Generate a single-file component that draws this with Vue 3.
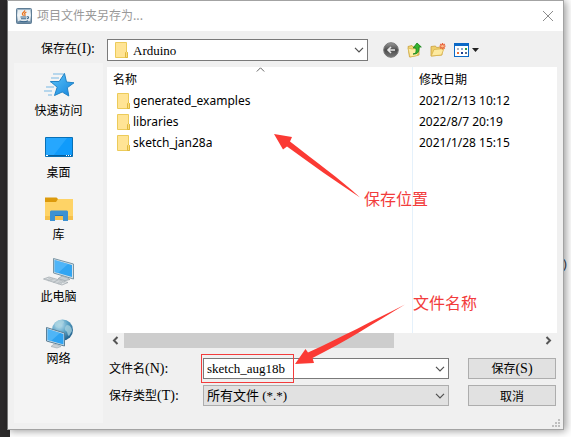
<script setup>
import { ref } from 'vue'

const folder = ref('Arduino')
const fileName = ref('sketch_aug18b')
const fileType = ref('所有文件 (*.*)')

const places = [
  { id: 'quick', label: '快速访问' },
  { id: 'desktop', label: '桌面' },
  { id: 'library', label: '库' },
  { id: 'pc', label: '此电脑' },
  { id: 'network', label: '网络' },
]

const files = [
  { name: 'generated_examples', date: '2021/2/13 10:12' },
  { name: 'libraries', date: '2022/8/7 20:19' },
  { name: 'sketch_jan28a', date: '2021/1/28 15:15' },
]
</script>

<template>
  <div class="page">
    <span class="behind">)</span>
    <main class="dialog">
      <header class="titlebar">
        <svg class="java" width="16" height="16" viewBox="0 0 16 16">
          <defs>
            <linearGradient id="javaBg" x1="0" y1="0" x2="0" y2="1">
              <stop offset="0" stop-color="#8fa9bd" />
              <stop offset=".45" stop-color="#e6edf2" />
              <stop offset="1" stop-color="#5d7f9b" />
            </linearGradient>
          </defs>
          <rect x=".5" y=".5" width="15" height="15" rx="1" fill="url(#javaBg)" stroke="#5f7d95" />
          <rect x="2" y="2" width="12" height="11" fill="#f5f7f8" opacity=".8" />
          <path d="M8.6 2.2c.8 1.6-2.6 2.4-2.2 4 .2.8 1 1 1 1.600M10.400 4c-1.600.8-2.200 1.500-1.500 2.400.4.5.2 1-.4 1.500" fill="none" stroke="#e8741e" stroke-width="1.300" />
          <path d="M4.500 9h6M5 10.800h5M3.500 13c2.500.8 6.500.8 8.500-.2M11 8.800c2-.6 2.200 1.500-.2 2" fill="none" stroke="#3c688c" stroke-width="1.100" />
        </svg>
        <h1>项目文件夹另存为...</h1>
        <button class="close" aria-label="关闭">
          <svg width="12" height="12" viewBox="0 0 12 12"><path d="M1 1l10 10M11 1L1 11" stroke="#8c8c8c" stroke-width="1" /></svg>
        </button>
      </header>

      <div class="lookin">
        <label for="folder">保存在<span class="key">(I):</span></label>
        <div class="tools">
          <div class="combo folder-combo">
            <svg class="folder combo-icon" width="13" height="16" viewBox="0 0 13 16">
              <path d="M.5.5h11v9l1 1v5H.5z" fill="#ffe495" stroke="#eccb5a" />
              <path d="M10.500 15.500v-5l1-1 1 1v5z" fill="#fbdc7c" stroke="#dfb93e" />
            </svg>
            <select id="folder" v-model="folder"><option>Arduino</option></select>
            <svg class="chev" width="10" height="6" viewBox="0 0 10 6"><path d="M1 .8l4 4 4-4" fill="none" stroke="#505050" stroke-width="1.200" /></svg>
          </div>
          <button aria-label="后退">
            <svg width="16" height="16" viewBox="0 0 16 16">
              <defs>
                <linearGradient id="backBg" x1="0" y1="0" x2="0" y2="1">
                  <stop offset="0" stop-color="#9a9a9a" /><stop offset=".5" stop-color="#4c4c4c" /><stop offset="1" stop-color="#777" />
                </linearGradient>
              </defs>
              <circle cx="8" cy="8" r="7.300" fill="url(#backBg)" stroke="#777" />
              <path d="M12 8H5M8 5L5 8l3 3" fill="none" stroke="#e8e8e8" stroke-width="1.600" />
            </svg>
          </button>
          <button aria-label="向上">
            <svg width="15" height="16" viewBox="0 0 15 16">
              <path d="M1 4.500l4-1 1 1.500 6-1.500v9.500L2.500 15z" fill="#f3d877" stroke="#c8a03a" stroke-width=".8" />
              <path d="M1 6l4 1 7-1-1.500 7.500L3 15z" fill="#fdeea6" stroke="#d6b04b" stroke-width=".7" />
              <path d="M6 12c3.500-.5 3.300-3 2.800-6H6.200L10 1l4.300 4H12c.3 4-.8 7.500-6 7z" fill="#35b32e" stroke="#16821a" stroke-width=".8" />
            </svg>
          </button>
          <button aria-label="新建文件夹">
            <svg width="16" height="16" viewBox="0 0 16 16">
              <path d="M1 14V4.500L5.500 4l1 1.500L12 5v8z" fill="#efcf6a" stroke="#c9a040" stroke-width=".8" />
              <path d="M1.200 14L4 7.500l10-1L11.500 13z" fill="#fdeaa0" stroke="#d8b24c" stroke-width=".8" />
              <path d="M12.500 1v6.500M9.500 4.200h6M10.300 2l4.400 4.500M14.700 2l-4.400 4.500" stroke="#e8623a" stroke-width="1.300" />
              <circle cx="12.500" cy="4.200" r="1.300" fill="#ffc08a" />
            </svg>
          </button>
          <button class="views" aria-label="查看">
            <svg width="26" height="16" viewBox="0 0 26 16">
              <rect x=".5" y="1.500" width="14" height="13" fill="#fff" stroke="#0b69c7" />
              <path d="M0 1h15v3H0z" fill="#0b69c7" />
              <path d="M3 6h2v2H3z" fill="#b0b4bc" /><path d="M7 6h2v2H7z" fill="#8aa7c9" /><path d="M11 6h2v2h-2z" fill="#2e9d47" />
              <path d="M3 10h2v2H3z" fill="#e8703a" /><path d="M7 10h2v2H7z" fill="#1d3f94" /><path d="M11 10h2v2h-2z" fill="#5b6c8b" />
              <path d="M18 6h7l-3.500 4z" fill="#222" />
            </svg>
          </button>
        </div>
      </div>

      <div class="content">
        <nav class="places">
          <a v-for="p in places" :key="p.id" href="#">
            <svg v-if="p.id === 'quick'" width="32" height="32" viewBox="0 0 32 32">
              <defs><linearGradient id="starBg" x1="0" y1="0" x2="1" y2="1"><stop offset="0" stop-color="#5cc6fa" /><stop offset="1" stop-color="#1583dc" /></linearGradient></defs>
              <path d="M10 5h12M8 9h8M10 13h-3M3 18h8M1 22h8M5 26h4" stroke="#78b8e4" stroke-width="1" />
              <path d="M21.500 4.500l2 8.500 7.500.8-6.700 4.900 1.500 8.300-6.600-4-7.700 3.500 2.700-8.300L7.500 12.500h8.700z" fill="url(#starBg)" stroke="#2384c6" />
            </svg>
            <svg v-else-if="p.id === 'desktop'" width="32" height="32" viewBox="0 0 32 32">
              <path d="M2.500 6.500h27v19h-27z" fill="#109bfb" stroke="#0870b6" />
              <path d="M3 7h21L10 25H3z" fill="#31adff" opacity=".7" />
              <path d="M3 24h26v1H3z" fill="#075e9c" />
              <path d="M3 24h2v1H3zM23 24h1v1h-1zM25 24h1v1h-1zM27 24h1v1h-1z" fill="#fff" />
            </svg>
            <svg v-else-if="p.id === 'library'" width="32" height="32" viewBox="0 0 32 32">
              <path d="M2 4.500h11.500L15 6v3H2z" fill="#dc9a0c" />
              <path d="M2 9h11l2-3h15v21H2z" fill="#fed366" /><path d="M2 23h28v4H2z" fill="#f5c04b" />
              <path d="M7 28V18.500L8 17.500h16l1 1V28h-5v-6h-8v6z" fill="#3c91d1" />
              <path d="M12 22h8v1h-8z" fill="#2477b9" />
            </svg>
            <svg v-else-if="p.id === 'pc'" width="32" height="32" viewBox="0 0 32 32">
              <path d="M10.500 3.500l20 5.500v15l-20-6z" fill="#d7e1e7" stroke="#7895a5" />
              <path d="M11.500 5l17.500 5v12l-17.500-5z" fill="#31a5f2" /><path d="M12 5l13 4-10 9-3-1z" fill="#64c0fb" opacity=".6" />
              <path d="M19 21l5 1.500 3 2-5 1.200-7-2z" fill="#c6ced3" stroke="#95a0a6" stroke-width=".7" />
              <path d="M.5 24L6 22l19 5.500-6 2.500z" fill="#e3e6e8" stroke="#9aa2a7" stroke-width=".7" />
              <path d="M3 24l16 4.500M5 23l17 5M5 26l5-2.500M10 27.500l5-2.500M15 29l5-2.500" stroke="#a7b0b6" stroke-width=".6" />
            </svg>
            <svg v-else width="32" height="32" viewBox="0 0 32 32">
              <defs><radialGradient id="globeBg" cx=".35" cy=".25" r=".8"><stop offset="0" stop-color="#c9e7f3" /><stop offset=".5" stop-color="#5ba3c6" /><stop offset="1" stop-color="#1f5e8a" /></radialGradient></defs>
              <circle cx="19.500" cy="13" r="10.500" fill="url(#globeBg)" />
              <path d="M13 5c4-3 8-2 8 0s-3 2-3 4-4 2-5 1-2-3 0-5zM24 8c3 0 5 3 5 6l-3 5c-2-1-1-4-3-5s-1-5 1-6z" fill="#a7d2df" opacity=".75" />
              <path d="M3.500 10.500l18 5.500v13l-18-5z" fill="#d4e1e8" stroke="#5a7f97" />
              <path d="M4.500 12l16 5v10.500l-16-4.500z" fill="#2ea3f1" /><path d="M5 12l12 4-9 8-3-1z" fill="#65c1fa" opacity=".6" />
              <path d="M11 27l4 1 3 1.500-4 1.500-6-1.500z" fill="#c9d0d4" stroke="#98a4ab" stroke-width=".6" />
            </svg>
            <span>{{ p.label }}</span>
          </a>
        </nav>

        <section class="main">
          <div class="files">
            <table>
              <thead>
                <tr>
                  <th class="name">
                    名称
                    <svg class="sort" width="9" height="5" viewBox="0 0 9 5"><path d="M.8 4.500l3.700-3.700 3.700 3.700" fill="none" stroke="#666" /></svg>
                  </th>
                  <th>修改日期</th>
                </tr>
              </thead>
              <tbody>
                <tr v-for="f in files" :key="f.name">
                  <td class="name">
                    <div class="entry">
                      <svg class="folder" width="13" height="16" viewBox="0 0 13 16">
                        <path d="M.5.5h11v9l1 1v5H.5z" fill="#ffe495" stroke="#eccb5a" />
                        <path d="M10.500 15.500v-5l1-1 1 1v5z" fill="#fbdc7c" stroke="#dfb93e" />
                      </svg>
                      {{ f.name }}
                    </div>
                  </td>
                  <td>{{ f.date }}</td>
                </tr>
              </tbody>
            </table>
          </div>
          <div class="scrollbar">
            <button aria-label="向左滚动"><svg width="7" height="9" viewBox="0 0 7 9"><path d="M5.500 1L2 4.500 5.500 8" fill="none" stroke="#555" stroke-width="2" /></svg></button>
            <div class="track"><div class="thumb"></div></div>
            <button aria-label="向右滚动"><svg width="7" height="9" viewBox="0 0 7 9"><path d="M1.500 1L5 4.500 1.500 8" fill="none" stroke="#555" stroke-width="2" /></svg></button>
          </div>

          <form class="form" @submit.prevent>
            <label for="fname">文件名<span class="key">(N):</span></label>
            <div class="combo">
              <input id="fname" v-model="fileName" type="text" />
              <svg class="chev" width="10" height="6" viewBox="0 0 10 6"><path d="M1 .8l4 4 4-4" fill="none" stroke="#505050" stroke-width="1.200" /></svg>
            </div>
            <button type="submit">保存<span class="key">(S)</span></button>
            <label for="ftype">保存类型<span class="key">(T):</span></label>
            <div class="combo type-combo">
              <select id="ftype" v-model="fileType"><option>所有文件 (*.*)</option></select>
              <svg class="chev" width="10" height="6" viewBox="0 0 10 6"><path d="M1 .8l4 4 4-4" fill="none" stroke="#505050" stroke-width="1.200" /></svg>
            </div>
            <button type="button">取消</button>
          </form>
        </section>
      </div>

      <svg class="grip" width="8" height="8" viewBox="0 0 8 8">
        <path d="M6 0h2v2H6zM3 3h2v2H3zM6 3h2v2H6zM0 6h2v2H0zM3 6h2v2H3zM6 6h2v2H6z" fill="#bfbfbf" />
      </svg>
    </main>

    <svg class="notes" width="571" height="437" viewBox="0 0 571 437">
      <path d="M274 134l18 3-2 4.500C315 161 340 179 360 197.500 335 181 311 164 287 146.500l-4 3z" fill="#fb3a34" />
      <path d="M295 364l10.500-15 2.500 3.500C342 337 372 321 405 304.500 374 323 345 342 312.500 358l1.500 5z" fill="#fb3a34" />
      <rect x="201.500" y="354.500" width="92" height="28" fill="none" stroke="#f23c3c" />
      <text x="364" y="205">保存位置</text>
      <text x="413" y="309">文件名称</text>
    </svg>
  </div>
</template>

<style>
body {
  margin: 0;
}
</style>

<style scoped>
.page {
  position: relative;
  box-sizing: border-box;
  min-height: 100vh;
  padding: 0 7px 7px;
  overflow: hidden;
  background: linear-gradient(90deg, #2c2a2b 10px, #fff 10px);
  font-family: "Noto Sans CJK SC", sans-serif;
  font-size: 12px;
  color: #000;
}
.behind {
  position: absolute;
  right: 4px;
  top: 256px;
  font: 13px/16px "Liberation Sans", sans-serif;
  color: #345;
}
.dialog {
  position: relative;
  border: 1px solid #a3a3a3;
  border-left-color: #777;
  background: #f0f0f0;
  box-shadow: 2px 1px 8px rgba(0, 0, 0, 0.4);
}
.titlebar {
  display: flex;
  align-items: center;
  gap: 5px;
  height: 30px;
  padding: 0 9px 0 8px;
  background: #fff;
}
h1 {
  flex: 1;
  margin: 0;
  padding-bottom: 2px;
  font-size: 12px;
  font-weight: 400;
  line-height: 18px;
  color: #999;
}
button {
  font-family: inherit;
  font-size: 12px;
  color: #000;
}
.close,
.tools button,
.scrollbar button {
  display: flex;
  align-items: center;
  justify-content: center;
  padding: 0;
  border: 0;
  background: none;
}
.key {
  font-family: "Liberation Serif", serif;
  font-size: 14px;
}
.lookin,
.content {
  display: grid;
  grid-template-columns: 89px minmax(0, 1fr);
  column-gap: 4px;
  padding: 0 6px;
}
.lookin {
  height: 24px;
  padding-top: 8px;
}
.lookin label {
  padding-right: 8px;
  text-align: right;
  line-height: 18px;
}
.tools {
  display: flex;
  align-items: center;
  gap: 8px;
  height: 22px;
}
.combo {
  position: relative;
  height: 21px;
}
.folder-combo {
  width: 58%;
  height: 22px;
  margin-right: 7px;
}
.combo select,
.combo input {
  display: block;
  box-sizing: border-box;
  width: 100%;
  height: 100%;
  margin: 0;
  padding: 0 20px 0 3px;
  border: 1px solid #7a7a7a;
  border-radius: 0;
  outline: 0;
  appearance: none;
  background: #fff;
  font-family: "Liberation Serif", "Noto Sans CJK SC", serif;
  font-size: 13px;
  color: #000;
}
.folder-combo select {
  padding-left: 25px;
}
.type-combo select {
  border-color: #adadad;
  background: #e1e1e1;
}
.combo-icon {
  position: absolute;
  left: 8px;
  top: 3px;
}
.chev {
  position: absolute;
  right: 4px;
  top: 8px;
  pointer-events: none;
}
.content {
  padding-bottom: 6px;
}
.places {
  display: flex;
  flex-direction: column;
  height: 360px;
  background: #f4f4f4;
}
.places a {
  display: flex;
  flex-direction: column;
  align-items: center;
  height: 56px;
  padding-top: 6px;
  line-height: 18px;
  color: #000;
  text-decoration: none;
}
.main {
  padding-top: 4px;
}
.files {
  height: 266px;
  background: linear-gradient(#e5f1fb, #e5f1fb) 68% 0 / 1px 100% no-repeat #fff;
}
table {
  width: 100%;
  border-collapse: collapse;
  table-layout: fixed;
}
th {
  height: 23px;
  padding: 0 6px;
  font-weight: 400;
  text-align: left;
  line-height: 20px;
}
th.name {
  position: relative;
  width: 68%;
  box-sizing: border-box;
}
.sort {
  position: absolute;
  left: 50%;
  top: 0;
  margin-left: -4px;
}
td {
  height: 21px;
  padding: 0 6px;
  font-family: "Noto Sans", "Noto Sans CJK SC", sans-serif;
  font-size: 12px;
  line-height: 20px;
}
td.name {
  padding-left: 10px;
}
.entry {
  display: flex;
  align-items: center;
  gap: 3px;
}
.scrollbar {
  display: flex;
  height: 15px;
}
.scrollbar button {
  width: 17px;
}
.track {
  flex: 1;
}
.thumb {
  width: 65%;
  height: 100%;
  background: #cdcdcd;
}
.form {
  display: grid;
  grid-template-columns: 77px minmax(0, 1fr) 88px;
  grid-auto-rows: 21px;
  gap: 6px 19px;
  padding: 10px 1px 0 0;
}
.form label {
  padding-left: 2px;
  line-height: 20px;
  white-space: nowrap;
}
.form > button {
  padding: 0;
  border: 1px solid #adadad;
  background: #e1e1e1;
  line-height: 18px;
}
.grip {
  position: absolute;
  right: 3px;
  bottom: 2px;
}
.notes {
  position: absolute;
  left: 0;
  top: 0;
  pointer-events: none;
}
.notes text {
  font-size: 16px;
  fill: #f23c3c;
}
</style>
